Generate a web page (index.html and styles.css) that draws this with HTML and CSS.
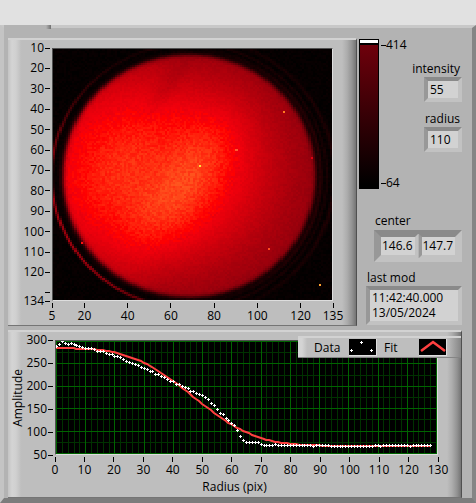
FILE: index.html
```
<!DOCTYPE html>
<html lang="en">
<head>
    <meta charset="utf-8">
    <title>Beam profile</title>
    <link rel="stylesheet" href="styles.css">
</head>
<body>
    <header class="toolbar"></header>
    <main class="panel">
        <div class="tab-edge"></div>
        <div class="top-row">
            <section class="frame image-frame">
                <svg class="axis axis-y" id="imageAxisY"></svg>
                <canvas class="plot" id="beamImage"></canvas>
                <svg class="axis axis-x" id="imageAxisX"></svg>
            </section>

            <aside class="side">
                <div class="ramp">
                    <div class="ramp-bar"></div>
                    <div class="ramp-scale">
                        <span>414</span>
                        <span>64</span>
                    </div>
                    <div class="readouts">
                        <label for="intensity">intensity</label>
                        <input class="sunken" id="intensity" type="text" value="55" readonly>
                        <label for="radius">radius</label>
                        <input class="sunken" id="radius" type="text" value="110" readonly>
                    </div>
                </div>
                <fieldset class="center">
                    <legend>center</legend>
                    <div class="cluster">
                        <input class="sunken" type="text" value="146.6" aria-label="center x" readonly>
                        <input class="sunken" type="text" value="147.7" aria-label="center y" readonly>
                    </div>
                </fieldset>
                <div class="last-mod">
                    <label for="lastMod">last mod</label>
                    <textarea class="sunken" id="lastMod" rows="2" readonly>11:42:40.000
13/05/2024</textarea>
                </div>
            </aside>
        </div>

        <section class="frame graph-frame">
            <div class="y-title"><span>Amplitude</span></div>
            <svg class="axis axis-y" id="graphAxisY"></svg>
            <canvas class="plot" id="graph"></canvas>
            <svg class="axis axis-x" id="graphAxisX"></svg>
            <div class="x-title">Radius (pix)</div>
            <div class="legend">
                <span>Data</span>
                <svg class="swatch" viewBox="0 0 27 16" shape-rendering="crispEdges">
                    <path d="M1 11h3v1h-3zM2 10h1v3h-1zM11 3h3v1h-3zM12 2h1v3h-1zM21 11h3v1h-3zM22 10h1v3h-1z" fill="#fff"/>
                </svg>
                <span>Fit</span>
                <svg class="swatch" viewBox="0 0 27 16">
                    <path d="M2 12L14 3L26 12" fill="none" stroke="#ff4040" stroke-width="2.500"/>
                </svg>
            </div>
        </section>
    </main>
    <script src="script.js"></script>
</body>
</html>
```
FILE: styles.css
```
* {
    box-sizing: border-box;
}

body {
    margin: 0;
    background: #b3b3b3;
    color: #000;
    font-family: "Open Sans", "Noto Sans", sans-serif;
    font-size: 12px;
    line-height: 16px;
}

.toolbar {
    height: 25px;
    background: #e1e1e1;
}

.panel {
    position: relative;
    padding: 10px 10px 0 4px;
    background: #b3b3b3;
    border-style: solid;
    border-width: 3px 4px 5px 4px;
    border-color: #c8c8c8 #858585 #7c7c7c #c4c4c4;
}

/* end of the tab strip, over the top edge of the panel */
.tab-edge {
    position: absolute;
    top: -3px;
    left: 0;
    width: 47px;
    height: 4px;
    background: linear-gradient(to right, #b3b3b3 42px, #707070);
}

.top-row {
    display: flex;
    gap: 2px;
}

/* raised frames */
.frame {
    position: relative;
    display: grid;
    padding-top: 8px;
    border-top: 2px solid #d2d2d2;
    border-bottom: 1px solid #757575;
    border-right: 1px solid #505050;
    background:
        linear-gradient(to right, #c4c4c4, #d4d4d4 4px, #d0d0d0 8px, #bfbfbf 13px, transparent 14px),
        linear-gradient(to left, #747474, #929292 4px, #adadad 9px, #bebebe 14px, transparent 15px),
        #bebebe;
}

.image-frame {
    flex: 1;
    grid-template-columns: 44px 1fr 23px;
    grid-template-rows: auto 24px;
}

.image-frame .plot {
    aspect-ratio: 281 / 253;
    image-rendering: pixelated;
}

.graph-frame {
    margin-top: 4px;
    grid-template-columns: 18px 29px 1fr 23px;
    grid-template-rows: 115px 24px 18px;
}

.plot {
    display: block;
    width: 100%;
    height: 100%;
    background: #000;
    border: 1px solid;
    border-color: #505050 #dedede #dedede #505050;
}

.axis {
    display: block;
    width: 100%;
    height: 100%;
    overflow: visible;
}

.axis-x {
    grid-column: 2;
}

.graph-frame .axis-x {
    grid-column: 3;
}

.axis line {
    stroke: #000;
    shape-rendering: crispEdges;
}

.axis-y text {
    text-anchor: end;
}

.axis-x text {
    text-anchor: middle;
}

.y-title {
    display: flex;
    align-items: center;
    justify-content: flex-end;
}

.y-title span {
    writing-mode: vertical-rl;
    rotate: 180deg;
}

.x-title {
    grid-column: 1 / -1;
    text-align: center;
}

.legend {
    position: absolute;
    top: 4px;
    right: 0;
    display: flex;
    align-items: center;
    width: 163px;
    height: 22px;
    padding-left: 16px;
    border-top: 2px solid #d2d2d2;
    border-bottom: 1px solid #858585;
    background:
        linear-gradient(to right, #d4d4d4 4px, #bfbfbf 9px, transparent 10px),
        linear-gradient(to left, #858585, #bebebe 14px, transparent 15px),
        #bebebe;
}

.legend span {
    width: 35px;
}

.swatch {
    width: 28px;
    height: 17px;
    margin-right: 7px;
    background: #000;
    border-right: 1px solid #dedede;
    border-bottom: 1px solid #dedede;
}

/* right-hand column */
.side {
    width: 103px;
}

.ramp {
    display: flex;
    padding-top: 1px;
}

.ramp-bar {
    width: 20px;
    height: 150px;
    border: 1px solid #000;
    background: linear-gradient(#fff 3px, #000 3px, #000 5px, #6e000b 5px, #000 145px);
}

.ramp-scale {
    display: flex;
    flex-direction: column;
    justify-content: space-between;
    height: 154px;
    margin-top: -2px;
    padding-left: 2px;
}

.ramp-scale span {
    display: flex;
    align-items: center;
}

.ramp-scale span::before {
    content: "";
    width: 5px;
    height: 1px;
    background: #000;
}

.readouts {
    display: flex;
    flex: 1;
    flex-direction: column;
    align-items: flex-end;
    margin-left: -16px;
    padding-top: 22px;
}

.readouts label {
    padding-right: 2px;
}

.readouts input {
    width: 38px;
    height: 25px;
    margin-bottom: 9px;
}

.sunken {
    display: block;
    margin: 0;
    padding: 0 2px;
    border: 4px solid;
    border-color: #8a8a8a #c2c2c2 #c2c2c2 #989898;
    border-radius: 0;
    outline: 0;
    background: #d2d2d2;
    color: #000;
    font: inherit;
}

.center {
    min-width: 0;
    margin: 22px 0 0;
    padding: 0 0 0 15px;
    border: 0;
}

.center legend {
    padding: 0 0 0 1px;
}

.cluster {
    display: flex;
    gap: 1px;
    height: 32px;
    margin-top: 1px;
    border: 4px solid;
    border-color: #8a8a8a #c2c2c2 #c2c2c2 #989898;
}

.cluster input {
    flex: 1;
    width: 0;
    padding: 0 1px;
    border-width: 3px;
}

.last-mod {
    margin-top: 8px;
    padding-left: 7px;
}

.last-mod label {
    display: block;
    padding-left: 1px;
}

.last-mod textarea {
    width: 100%;
    height: 39px;
    line-height: 15px;
    overflow: hidden;
    resize: none;
}
```
FILE: script.js
```
const SVG_NS = 'http://www.w3.org/2000/svg';

// averaged amplitude for each radius, 0 to 128
const DATA = [
    289, 293, 299, 296, 294, 296, 294, 292, 289, 287, 284, 285, 284, 282, 278, 278,
    278, 274, 272, 270, 267, 267, 264, 259, 256, 254, 252, 248, 246, 241, 239, 237,
    232, 232, 226, 226, 221, 219, 215, 210, 210, 205, 203, 199, 197, 195, 189, 189,
    184, 182, 180, 175, 170, 162, 158, 149, 140, 136, 129, 123, 118, 112, 101, 88,
    79, 74, 74, 74, 74, 74, 70, 68, 68, 68, 68, 70
];
while (DATA.length < 129) {
    const r = DATA.length;
    DATA.push((r > 93 && r < 109) || r === 88 || r === 111 || r === 121 ? 66 : 68);
}

function addNode(svg, name, attrs, text) {
    const node = document.createElementNS(SVG_NS, name);
    for (const key in attrs) node.setAttribute(key, attrs[key]);
    if (text !== undefined) node.textContent = text;
    svg.appendChild(node);
}

function drawAxisX(id, min, max, ticks) {
    const svg = document.getElementById(id);
    ticks.forEach(v => {
        const x = (v - min) / (max - min) * 100 + '%';
        addNode(svg, 'line', {x1: x, x2: x, y1: 2, y2: 7});
        addNode(svg, 'text', {x: x, y: 19}, v);
    });
}

function drawAxisY(id, min, max, ticks, unlabelled) {
    const svg = document.getElementById(id);
    const width = svg.clientWidth;
    ticks.forEach(v => {
        const y = (v - min) / (max - min) * 100 + '%';
        addNode(svg, 'line', {x1: width - 7, x2: width - 2, y1: y, y2: y});
        if (v !== unlabelled) {
            addNode(svg, 'text', {x: width - 8, y: y, dy: 4}, v);
        }
    });
}

// tilted bright spot, long side running from lower left to upper right
function spot(x, y, cx, cy, long, short) {
    const along = (x - cx) * 0.6 - (y - cy) * 0.8;
    const across = (x - cx) * 0.8 + (y - cy) * 0.6;
    return Math.exp(-Math.pow(along / long, 2) - Math.pow(across / short, 2));
}

// light level of the beam at a point, in units of the 281 x 253 image
function beamLevel(x, y) {
    const dx = x - 136;
    const dy = y - 127;
    const rho = Math.hypot(dx / 127, dy / 122);
    const angle = Math.atan2(dy, dx);
    const noise = Math.random() - 0.5;

    const d = Math.hypot((x - 106) / 118, (y - 122) / 102);
    let level = 142 + 116 * Math.exp(-Math.pow(d, 3.2));
    level += 30 * Math.max(0, 1 - x / 110);
    level += 30 * spot(x, y, 147, 112, 66, 32);
    level += 30 * spot(x, y, 112, 162, 66, 34);
    level += 18 * spot(x, y, 72, 115, 60, 36);
    level -= 18 * spot(x, y, 114, 38, 36, 9);
    level += noise * (level > 240 ? 24 : 12);

    // soft edge of the aperture
    const edge = 1 / (1 + Math.exp((rho - 1) * 90));
    const left = Math.max(0, -Math.cos(angle + 0.45));
    const right = Math.max(0, Math.cos(angle));
    let rings = (18 + 140 * left * left) * Math.exp(-Math.pow((rho - 1.09) / 0.012, 2));
    rings += 32 * right * Math.exp(-Math.pow((rho - 1.045) / 0.016, 2));
    rings += 24 * right * Math.exp(-Math.pow((rho - 1.15) / 0.016, 2));
    return level * edge + (rings + 5 + noise * 10) * (1 - edge);
}

function drawBeam() {
    const canvas = document.getElementById('beamImage');
    canvas.width = 130;
    canvas.height = 125;
    const ctx = canvas.getContext('2d');
    const image = ctx.createImageData(130, 125);
    for (let row = 0; row < 125; row++) {
        for (let col = 0; col < 130; col++) {
            const level = Math.max(0, beamLevel(col * 2.16, row * 2.024));
            const hot = Math.max(0, level - 255);
            const i = (row * 130 + col) * 4;
            image.data[i] = Math.min(255, level);
            image.data[i + 1] = hot * 1.4;
            image.data[i + 2] = hot > 0 ? hot * 0.5 : Math.min(12, level * 0.08, 255 - level);
            image.data[i + 3] = 255;
        }
    }
    ctx.putImageData(image, 0, 0);

    // hot pixels
    [[68, 58, '#ffe040'], [107, 31, '#ff7a20'], [100, 99, '#ff4a20'], [85, 50, '#ff5a30'],
     [124, 117, '#ffa030'], [120, 54, '#e00010'], [13, 96, '#ff1010']].forEach(p => {
        ctx.fillStyle = p[2];
        ctx.fillRect(p[0], p[1], 1, 1);
    });
}

function drawGraph() {
    const canvas = document.getElementById('graph');
    const w = canvas.width = canvas.clientWidth;
    const h = canvas.height = canvas.clientHeight;
    const ctx = canvas.getContext('2d');
    const px = r => Math.round(r / 130 * (w - 1));
    const py = a => Math.round((300 - a) / 250 * (h - 1));

    ['#003200', '#006400'].forEach((color, major) => {
        ctx.fillStyle = color;
        for (let r = 0; r <= 130; r += major ? 10 : 2) ctx.fillRect(px(r), 0, 1, h);
        for (let a = 50; a <= 300; a += major ? 50 : 25) ctx.fillRect(0, py(a), w, 1);
    });

    ctx.strokeStyle = '#ff4040';
    ctx.lineWidth = 2;
    ctx.beginPath();
    for (let r = 0; r <= 128; r++) {
        const fit = 66 + 217.5 * Math.exp(-Math.pow(r / 52.8, 3.25));
        ctx.lineTo(px(r), py(fit));
    }
    ctx.stroke();

    ctx.fillStyle = '#fff';
    DATA.forEach((a, r) => {
        ctx.fillRect(px(r) - 1, py(a), 3, 1);
        ctx.fillRect(px(r), py(a) - 1, 1, 3);
    });
}

drawAxisX('imageAxisX', 5, 135, [5, 20, 40, 60, 80, 100, 120, 135]);
drawAxisY('imageAxisY', 10, 134, [10, 20, 30, 40, 50, 60, 70, 80, 90, 100, 110, 120, 130, 134], 130);
drawAxisX('graphAxisX', 0, 130, [0, 10, 20, 30, 40, 50, 60, 70, 80, 90, 100, 110, 120, 130]);
drawAxisY('graphAxisY', 300, 50, [300, 250, 200, 150, 100, 50]);
drawBeam();
drawGraph();
window.addEventListener('resize', drawGraph);
```
